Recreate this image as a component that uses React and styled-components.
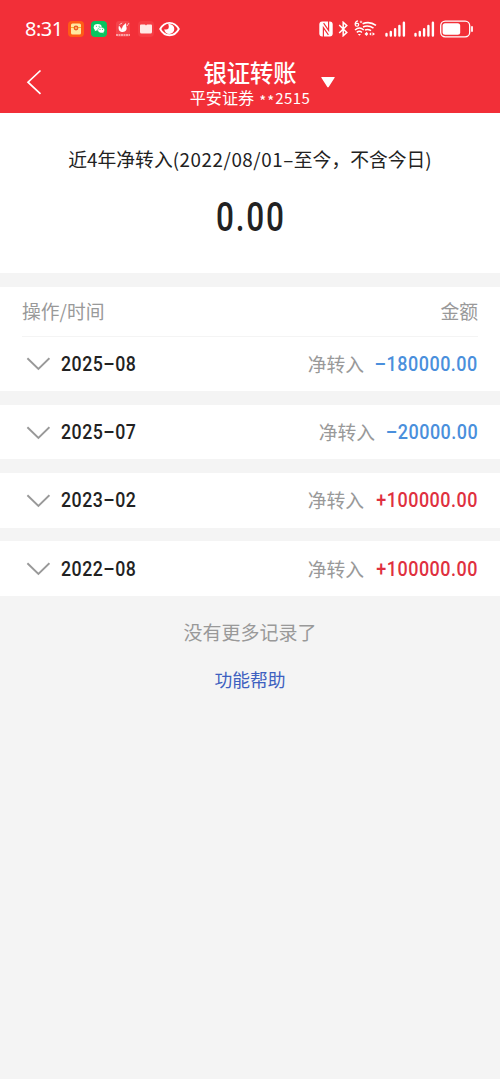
import React from "react";
import styled, { createGlobalStyle } from "styled-components";

const GlobalStyle = createGlobalStyle`
  * { box-sizing: border-box; }
  body {
    margin: 0;
    background: #f4f4f4;
    font-family: "Noto Sans CJK SC", sans-serif;
    color: #222;
  }
`;

const Screen = styled.main`
  width: 500px;
  min-height: 1079px;
  background: #f4f4f4;
  overflow: hidden;
`;

const Header = styled.header`
  height: 113px;
  background: #f22f38;
  color: #fff;
`;

const StatusBar = styled.div`
  height: 57px;
  padding: 0 26px 0 25px;
  display: flex;
  justify-content: space-between;
  align-items: center;
`;

const StatusGroup = styled.div`
  display: flex;
  align-items: center;
  gap: ${(p) => p.$gap}px;
`;

const Clock = styled.span`
  width: 36px;
  font: 400 20px/24px "Noto Sans", sans-serif;
  letter-spacing: -0.5px;
  white-space: nowrap;
`;

const TitleBar = styled.div`
  height: 56px;
  display: grid;
  grid-template-columns: 190px 120px 1fr;
`;

const BackButton = styled.button`
  align-self: start;
  padding: 12px 0 0 26px;
  border: 0;
  background: none;
  text-align: left;
  svg { display: block; }
`;

const TitleBlock = styled.div`
  display: flex;
  flex-direction: column;
  align-items: center;
`;

const Title = styled.h1`
  margin: 0;
  font-size: 23.3px;
  line-height: 31px;
  font-weight: 500;
  white-space: nowrap;
`;

const Account = styled.div`
  display: flex;
  align-items: center;
  gap: 5px;
  font-size: 16.1px;
  line-height: 19px;
  white-space: nowrap;
`;

const AccountNumber = styled.span`
  font-size: 15px;
  letter-spacing: 0.45px;
`;

const Mask = styled.span`
  display: inline-block;
  letter-spacing: 1px;
  transform: translateY(3px);
`;

const Caret = styled.svg`
  display: block;
  margin: 19px 0 0 10px;
`;

const Summary = styled.section`
  height: 160px;
  padding-top: 32px;
  background: #fff;
  text-align: center;
`;

const SummaryLabel = styled.div`
  font-size: 18.8px;
  line-height: 28px;
  white-space: nowrap;
`;

const Period = styled.span`
  letter-spacing: 0.55px;
`;

const Total = styled.div`
  margin-top: 20px;
  font: 500 41px/48px Roboto, sans-serif;
  letter-spacing: 2.3px;
  text-indent: 2.3px;
  transform: scaleX(0.77);
`;

const Records = styled.section`
  margin-top: 14px;
  display: flex;
  flex-direction: column;
  gap: 13.5px;
`;

const Group = styled.div`
  background: #fff;
  padding: 0 22px;
`;

const ColumnHeads = styled.div`
  height: 49.6px;
  padding-bottom: 1px;
  display: flex;
  justify-content: space-between;
  align-items: center;
  border-bottom: 1px solid #f4f4f4;
  color: #999;
  font-size: 18.8px;
`;

const Row = styled.div`
  height: 54.7px;
  display: flex;
  align-items: center;
`;

const Chevron = styled.svg`
  margin: 1px 11px 0 4px;
  flex: none;
`;

const Month = styled.span`
  flex: 1;
  font: 500 21px/24px Roboto, sans-serif;
  letter-spacing: 0.6px;
  transform: scaleX(0.845);
  transform-origin: left;
`;

const Kind = styled.span`
  margin-top: -1px;
  color: #999;
  font-size: 18.8px;
`;

const Amount = styled.span`
  width: ${(p) => p.$width}px;
  display: flex;
  justify-content: flex-end;
  font: 500 21px/24px Roboto, sans-serif;
  letter-spacing: 0.6px;
  white-space: nowrap;
  color: ${(p) => (p.$negative ? "#4a8fdc" : "#df3040")};
  span {
    transform: scaleX(0.855);
    transform-origin: right;
  }
`;

const Ending = styled.footer`
  display: flex;
  flex-direction: column;
  align-items: center;
  padding-top: 22px;
`;

const EndNote = styled.p`
  margin: 0;
  color: #999;
  font-size: 19px;
  line-height: 28px;
`;

const HelpLink = styled.a`
  margin-top: 20px;
  color: #3d60c0;
  font-size: 17.8px;
  line-height: 26px;
`;

const records = [
  { month: "2025–08", amount: "–180000.00", width: 114 },
  { month: "2025–07", amount: "–20000.00", width: 103 },
  { month: "2023–02", amount: "+100000.00", width: 114 },
  { month: "2022–08", amount: "+100000.00", width: 114 },
];

function PacketIcon() {
  return (
    <svg width="16" height="16" viewBox="0 0 16 16">
      <rect width="16" height="16" rx="4" fill="#ff5c16" />
      <rect x="3" y="2.5" width="10" height="11" rx="1.5" fill="#ffe9a0" />
      <path d="M3 6.5h10" stroke="#f8ac31" fill="none" />
      <circle cx="8" cy="7" r="2.4" fill="#ef5b28" />
      <circle cx="8" cy="7" r="0.9" fill="#ffd36b" />
    </svg>
  );
}

function ChatIcon() {
  return (
    <svg width="16" height="16" viewBox="0 0 16 16">
      <rect width="16" height="16" rx="4" fill="#08c45f" />
      <path d="m4 8-.2 2.2 1.8-1Z" fill="#fff" />
      <ellipse cx="6.7" cy="6.3" rx="4" ry="3.2" fill="#fff" />
      <path d="M10.2 6.2c2 0 3.5 1.3 3.5 2.9 0 .9-.5 1.6-1.1 2.2l.2 1.3-1.3-.7c-2.6.7-4.8-.8-4.8-2.8 0-1.6 1.5-2.9 3.5-2.9Z" fill="#fff" stroke="#08c45f" strokeWidth=".5" />
      <path d="M5.3 5.3h.1M8.1 5.3h.1M9 8.4h.1M11.4 8.4h.1" stroke="#08c45f" strokeLinecap="round" />
    </svg>
  );
}

function AppIcon() {
  return (
    <svg width="16" height="16" viewBox="0 0 16 16">
      <rect x="1" width="14" height="16" rx="3" fill="#f5434a" />
      <path d="M4 4.5C2.9 7.8 4 10.7 7 11c3.6.4 5.5-2.5 4.3-5.2L11 2 8 4.8 6.6 7.9Z" fill="#fff" />
      <path d="M4.5 3.5 7.2 2M12 5l2-3M5.2 7.5l2 1.8" stroke="#ffd0d0" strokeWidth=".9" />
      <path d="M1 14h14" stroke="#fff" strokeWidth="1" strokeDasharray="2 .5" />
    </svg>
  );
}

function FolderIcon() {
  return (
    <svg width="16" height="16" viewBox="0 0 16 16">
      <rect width="16" height="16" rx="4" fill="#f53d44" />
      <path d="M3 3.6h4l1 1 1-1h4q1 0 1 1V11q0 1.5-1.5 1.5h-9Q2 12.5 2 11V4.6q0-1 1-1Z" fill="#ffe9e6" />
    </svg>
  );
}

const EyeSvg = styled.svg`
  margin-left: -2px;
`;

function EyeIcon() {
  return (
    <EyeSvg width="21" height="16" viewBox="0 0 21 16" fill="none">
      <path d="M1.2 8C5.4-.3 15.6-.3 19.8 8 15.6 16.3 5.4 16.3 1.2 8Z" stroke="#fff" strokeWidth="1.8" />
      <path d="M10.5 3a5 5 0 1 1-5.2 5.2Q8 9.2 9.6 7.3 10.6 5.7 9.1 3.3Z" fill="#fff" />
    </EyeSvg>
  );
}

function NfcIcon() {
  return (
    <svg width="14" height="16" viewBox="0 0 14 16" fill="none">
      <rect x=".3" y=".6" width="13.4" height="14.8" rx="3" fill="#fff" />
      <path d="M4.2 15.4V5.2l4.5 5.6M9.8.6v10.2L5.3 5.2" stroke="#f22f38" strokeWidth="0" />
      <path d="M4.4 16V6.6l5 7.2M9.6 0v9.4l-5-7.2" stroke="#f22f38" strokeWidth="1.2" />
    </svg>
  );
}

function BluetoothIcon() {
  return (
    <svg width="11" height="16" viewBox="0 0 11 16" fill="none">
      <path d="m1.2 4 7.6 7.4-3.6 3.3V1.3l3.6 3.3L1.2 12" stroke="#fff" strokeWidth="1.5" />
    </svg>
  );
}

function WifiIcon() {
  return (
    <svg width="23" height="17" viewBox="0 0 23 17" fill="none" stroke="#fff">
      <path d="M4 .9C1.8 1.3.8 3.2 1.2 4.8c.5 2 3.5 1.8 3.5 0 0-1.7-2.4-1.9-3.3-.5" strokeWidth="1.2" />
      <circle cx="7" cy="1.9" r=".8" strokeWidth=".8" />
      <path d="M8.6 3.8Q15.5.9 22 5.3M9 6.9q5.4-2.3 10.5 1.2M11 9.9q3-1.2 6 .7" strokeWidth="1.6" />
      <path d="M1 10q4.5-4 8.8 0M2.8 12.4q2.7-2.3 5.1 0" strokeWidth="1.4" />
      <path d="m3.8 14 1.6 1.8L7 14ZM10.5 14l2.2-2.2 1.5 2.1-1.6 2ZM15.2 14l2-1.7v3.4ZM18.5 12.3l2.5 1.7-2.5 1.7Z" fill="#fff" stroke="none" />
    </svg>
  );
}

function SignalIcon() {
  return (
    <svg width="21" height="16" viewBox="0 0 21 16">
      <path d="M1.5 14.5v-1.5M5.8 14.5v-3.5M10.1 14.5V8.3M14.4 14.5V5M18.9 14.5V1.8" stroke="#fff" strokeWidth="2.4" strokeLinecap="round" />
    </svg>
  );
}

function BatteryIcon() {
  return (
    <svg width="34" height="18" viewBox="0 0 34 18">
      <rect x=".7" y="1.2" width="29" height="15.6" rx="4.5" stroke="#fff" strokeWidth="1.3" fill="none" />
      <rect x="2.6" y="3.3" width="17.6" height="11.4" rx="2.5" fill="#fff" />
      <path d="M32 7v4" stroke="#fff" strokeWidth="1.8" strokeLinecap="round" />
    </svg>
  );
}

export default function App() {
  return (
    <Screen>
      <GlobalStyle />
      <Header>
        <StatusBar>
          <StatusGroup $gap={7.2}>
            <Clock>8:31</Clock>
            <PacketIcon />
            <ChatIcon />
            <AppIcon />
            <FolderIcon />
            <EyeIcon />
          </StatusGroup>
          <StatusGroup $gap={5}>
            <StatusGroup $gap={8}>
              <StatusGroup $gap={5}>
                <NfcIcon />
                <BluetoothIcon />
                <WifiIcon />
              </StatusGroup>
              <SignalIcon />
              <SignalIcon />
            </StatusGroup>
            <BatteryIcon />
          </StatusGroup>
        </StatusBar>
        <TitleBar>
          <BackButton aria-label="返回">
            <svg width="16" height="26" viewBox="0 0 16 26" fill="none">
              <path d="M14.5 1.5 2 13.2l12.5 11.7" stroke="#fff" strokeWidth="1.7" />
            </svg>
          </BackButton>
          <TitleBlock>
            <Title>银证转账</Title>
            <Account>
              平安证券
              <AccountNumber><Mask>**</Mask>2515</AccountNumber>
            </Account>
          </TitleBlock>
          <Caret width="16" height="13" viewBox="0 0 16 13">
            <path d="M1.8 1h12.4q1 0 .4.8L8.7 11q-.7.9-1.4 0L1.4 1.8Q.8 1 1.8 1Z" fill="#fff" />
          </Caret>
        </TitleBar>
      </Header>
      <Summary>
        <SummaryLabel>近4年净转入<Period>(2022/08/01–</Period>至今，不含今日)</SummaryLabel>
        <Total>0.00</Total>
      </Summary>
      <Records>
        {records.map((record, index) => (
          <Group key={record.month}>
            {index === 0 && (
              <ColumnHeads>
                <span>操作/时间</span>
                <span>金额</span>
              </ColumnHeads>
            )}
            <Row>
              <Chevron width="24" height="14" viewBox="0 0 24 14" fill="none">
                <path d="m1.4 1.2 11 10.8 11-10.8" stroke="#999" strokeWidth="1.9" />
              </Chevron>
              <Month>{record.month}</Month>
              <Kind>净转入</Kind>
              <Amount $width={record.width} $negative={record.amount[0] === "–"}>
                <span>{record.amount}</span>
              </Amount>
            </Row>
          </Group>
        ))}
      </Records>
      <Ending>
        <EndNote>没有更多记录了</EndNote>
        <HelpLink>功能帮助</HelpLink>
      </Ending>
    </Screen>
  );
}
